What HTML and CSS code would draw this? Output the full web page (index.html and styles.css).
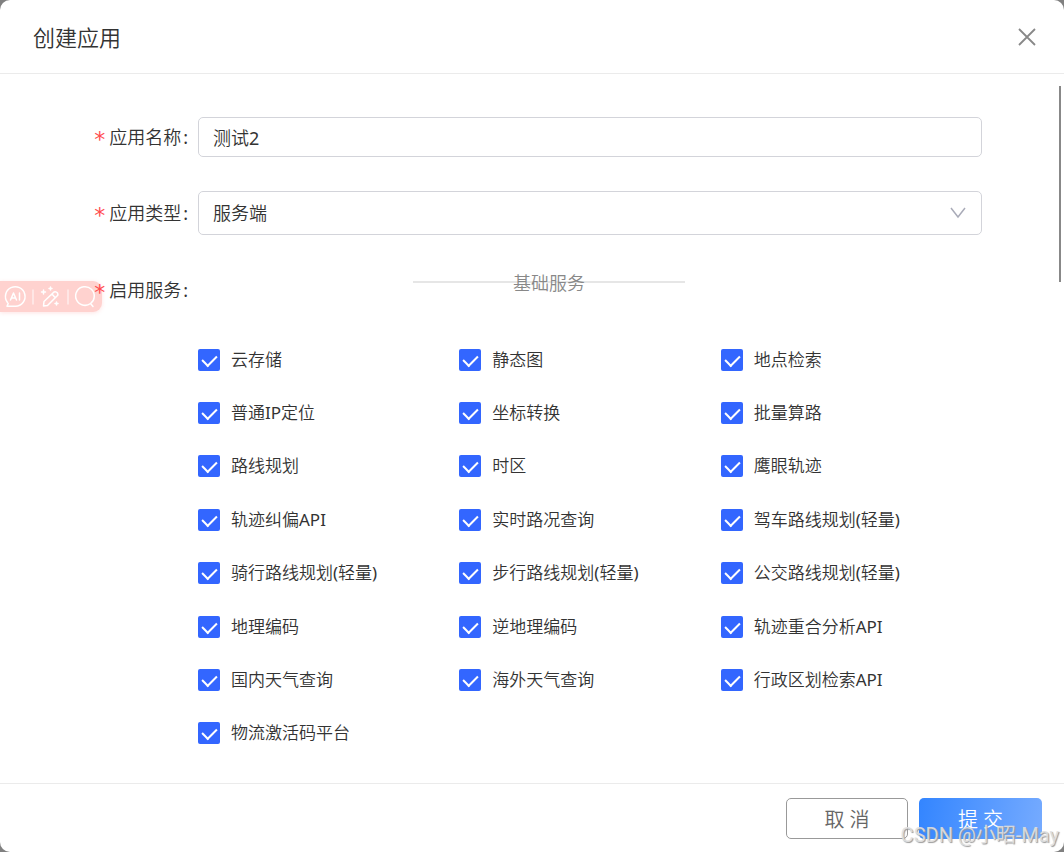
FILE: index.html
```html
<!DOCTYPE html>
<html lang="zh-CN">
<head>
    <meta charset="UTF-8">
    <meta name="viewport" content="width=device-width, initial-scale=1.0">
    <title>创建应用</title>
    <link rel="stylesheet" href="styles.css">
</head>
<body>
    <form class="dialog">
        <header class="dialog-header">
            <h1>创建应用</h1>
            <button type="button" class="close" aria-label="关闭">
                <svg width="18" height="18" viewBox="0 0 18 18"><path d="M1 1L17 17M17 1L1 17" fill="none" stroke="#888" stroke-width="1.8"/></svg>
            </button>
        </header>

        <main class="dialog-body">
            <div class="row">
                <label class="row-label" for="name"><span class="required">*</span>应用名称<span class="colon">:</span></label>
                <input class="control" id="name" type="text" value="测试2">
            </div>
            <div class="row">
                <label class="row-label" for="type"><span class="required">*</span>应用类型<span class="colon">:</span></label>
                <div class="select-wrap">
                    <select class="control" id="type">
                        <option>服务端</option>
                    </select>
                    <svg class="arrow" width="16" height="12" viewBox="0 0 16 12"><path d="M1 1L8 10L15 1" fill="none" stroke="#a9abb8" stroke-width="1.5"/></svg>
                </div>
            </div>
            <div class="row row-services">
                <div class="row-label" id="services-label"><span class="required">*</span>启用服务<span class="colon">:</span></div>
                <div class="services" role="group" aria-labelledby="services-label">
                    <div class="divider"><span>基础服务</span></div>
                    <div class="service-grid">
                        <label><input type="checkbox" checked>云存储</label>
                        <label><input type="checkbox" checked>静态图</label>
                        <label><input type="checkbox" checked>地点检索</label>
                        <label><input type="checkbox" checked>普通IP定位</label>
                        <label><input type="checkbox" checked>坐标转换</label>
                        <label><input type="checkbox" checked>批量算路</label>
                        <label><input type="checkbox" checked>路线规划</label>
                        <label><input type="checkbox" checked>时区</label>
                        <label><input type="checkbox" checked>鹰眼轨迹</label>
                        <label><input type="checkbox" checked>轨迹纠偏API</label>
                        <label><input type="checkbox" checked>实时路况查询</label>
                        <label><input type="checkbox" checked>驾车路线规划(轻量)</label>
                        <label><input type="checkbox" checked>骑行路线规划(轻量)</label>
                        <label><input type="checkbox" checked>步行路线规划(轻量)</label>
                        <label><input type="checkbox" checked>公交路线规划(轻量)</label>
                        <label><input type="checkbox" checked>地理编码</label>
                        <label><input type="checkbox" checked>逆地理编码</label>
                        <label><input type="checkbox" checked>轨迹重合分析API</label>
                        <label><input type="checkbox" checked>国内天气查询</label>
                        <label><input type="checkbox" checked>海外天气查询</label>
                        <label><input type="checkbox" checked>行政区划检索API</label>
                        <label><input type="checkbox" checked>物流激活码平台</label>
                    </div>
                </div>
            </div>
        </main>

        <footer class="dialog-footer">
            <button type="button" class="btn">取 消</button>
            <button type="submit" class="btn btn-primary">提 交</button>
        </footer>

        <div class="scroll-thumb"></div>
        <div class="ai-bar">
            <svg width="102" height="31" viewBox="0 0 102 31" fill="none" stroke="#fff" stroke-width="1.5" stroke-linecap="round" stroke-linejoin="round">
                <path d="M7.500 21.500A9.800 9.800 0 1 1 15.500 25.300H7L8.200 22.500"/>
                <path d="M10.500 19L13.500 12L16.500 19M11.600 17H15.400M19.500 12V19"/>
                <path d="M33 9V23M68 9V23" stroke-opacity=".6"/>
                <path d="M44 20.500L54 11Q56 10 57.500 12Q58.500 14 57 15L47.500 24.500L43.500 25ZM52 13L55 16.500"/>
                <path d="M43.500 9V13M41.500 11H45.500M50.500 6V9M49 7.500H52M56.500 21V24M55 22.500H58"/>
                <path d="M90.500 22.500A9.300 9.300 0 1 1 94.200 16Q94 20 90.500 22.500L93 25.500"/>
            </svg>
        </div>
        <div class="watermark">CSDN @小昭-May</div>
    </form>
</body>
</html>
```

FILE: styles.css
```css
* {
    box-sizing: border-box;
}
body {
    margin: 0;
    background-color: #808080;
    color: #333;
    font-family: "Noto Sans", "Noto Sans CJK SC DemiLight", "Noto Sans CJK SC", sans-serif;
    font-size: 18px;
    line-height: 24px;
}
button, input, select {
    font: inherit;
    color: inherit;
}
.dialog {
    position: relative;
    display: flex;
    flex-direction: column;
    min-height: 100vh;
    background: #fff;
    border-radius: 10px;
    overflow: hidden;
}

/* header */
.dialog-header {
    display: flex;
    justify-content: space-between;
    align-items: center;
    height: 74px;
    padding: 0 28px 0 33px;
    border-bottom: 1px solid #ebebeb;
}
.dialog-header h1 {
    margin: 0;
    font-size: 22px;
    font-weight: inherit;
    line-height: 28px;
}
.close {
    display: flex;
    padding: 0;
    border: none;
    background: none;
    cursor: pointer;
}

/* form */
.dialog-body {
    flex: 1;
    display: flex;
    flex-direction: column;
    padding: 43px 82px 23px 0;
}
.row {
    display: flex;
    align-items: center;
    margin-bottom: 34px;
}
.row-label {
    flex: none;
    width: 198px;
    padding-right: 10px;
    text-align: right;
}
.required {
    margin-right: 4px;
    color: #ff4d4f;
    font-family: "DejaVu Sans", sans-serif;
    font-size: 22px;
    line-height: 20px;
    vertical-align: -3px;
}
.colon {
    margin-left: 2px;
}
.control {
    display: block;
    width: 100%;
    height: 40px;
    padding: 0 14px;
    border: 1px solid #d3d4da;
    border-radius: 5px;
    background: #fff;
}
.select-wrap {
    position: relative;
    flex: 1;
}
.select-wrap .control {
    height: 44px;
    appearance: none;
}
.arrow {
    position: absolute;
    top: 16px;
    right: 16px;
    pointer-events: none;
}
.row-services {
    flex: 1;
    align-items: stretch;
    margin: 0;
}
.row-services .row-label {
    padding-top: 9px;
}
.services {
    flex: 1;
    display: flex;
    flex-direction: column;
}
.divider {
    width: 272px;
    margin: 0 0 38px 215px;
    padding-top: 2px;
    background: linear-gradient(#e6e6e6, #e6e6e6) center 12px / 100% 2px no-repeat;
    color: #888;
    text-align: center;
}
.service-grid {
    flex: 1;
    display: grid;
    grid-template-columns: repeat(3, 1fr);
    grid-auto-rows: 1fr;
    font-size: 17px;
}
.service-grid label {
    display: flex;
    align-items: center;
}
.service-grid input {
    position: relative;
    width: 22px;
    height: 22px;
    margin: 0 11px 0 0;
    border-radius: 2px;
    background: #36f;
    appearance: none;
}
.service-grid input:not(:checked) {
    border: 1px solid #d3d4da;
    background: #fff;
}
.service-grid input:checked::after {
    content: "";
    position: absolute;
    top: 3px;
    left: 7px;
    width: 7px;
    height: 12px;
    border: solid #fff;
    border-width: 0 2px 2px 0;
    transform: rotate(45deg);
}

/* footer */
.dialog-footer {
    display: flex;
    justify-content: flex-end;
    gap: 11px;
    padding: 14px 22px 13px;
    border-top: 1px solid #ebebeb;
}
.btn {
    width: 122px;
    height: 41px;
    padding: 3px 0 0;
    border: 1px solid #999;
    border-radius: 5px;
    background: #fff;
    color: #666;
    font-size: 20px;
    cursor: pointer;
}
.btn-primary {
    width: 123px;
    border: none;
    background: linear-gradient(100deg, #3385ff, #76abff);
    color: #fff;
}

/* things floating over the dialog */
.scroll-thumb {
    position: absolute;
    top: 86px;
    right: 3px;
    width: 2px;
    height: 196px;
    background: #888;
}
.ai-bar {
    position: absolute;
    top: 281px;
    left: 0;
    width: 102px;
    height: 31px;
    border-radius: 0 9px 9px 0;
    background: #ffd2cf;
    box-shadow: 0 1px 4px rgba(255, 120, 120, 0.2);
}
.row-services .required {
    position: relative;
    z-index: 1;
}
.watermark {
    position: absolute;
    right: 5px;
    bottom: 5px;
    color: rgba(225, 225, 225, 0.9);
    font-family: Roboto, "Noto Sans CJK SC", sans-serif;
    font-size: 20px;
    text-shadow: 1px 1px 1px #999;
    pointer-events: none;
}
```
